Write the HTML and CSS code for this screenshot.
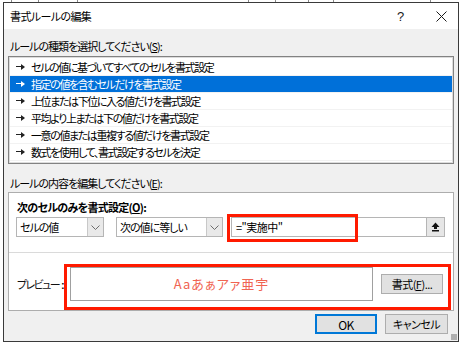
FILE: index.html
```html
<!DOCTYPE html>
<html lang="ja">
<head>
  <meta charset="UTF-8">
  <title>書式ルールの編集</title>
  <link rel="stylesheet" href="styles.css">
</head>
<body>
  <div class="backdrop">
    <span class="tick" style="left: 11px"></span>
    <span class="tick" style="left: 38px"></span>
    <span class="tick" style="left: 77px"></span>
    <span class="tick" style="left: 248px"></span>
    <span class="tick" style="left: 275px"></span>
    <span class="tick" style="left: 308px"></span>
    <span class="tick" style="left: 333px"></span>
    <span class="tick" style="left: 430px"></span>
  </div>

  <!-- Dialog window -->
  <div class="window">
    <div class="titlebar">
      <span class="title">書式ルールの編集</span>
      <span class="help">?</span>
      <span class="close">
        <svg width="11" height="11" viewBox="0 0 11 11"><path d="M0.5 0.5 L10.5 10.5 M10.5 0.5 L0.5 10.5" stroke="#1a1a1a" stroke-width="1"/></svg>
      </span>
    </div>

    <div class="content">
      <div class="label">ルールの種類を選択してください(<u>S</u>):</div>
      <ul class="rule-list">
        <li><span class="arrow"></span>セルの値に基づいてすべてのセルを書式設定</li>
        <li class="selected"><span class="arrow"></span>指定の値を含むセルだけを書式設定</li>
        <li><span class="arrow"></span>上位または下位に入る値だけを書式設定</li>
        <li><span class="arrow"></span>平均より上または下の値だけを書式設定</li>
        <li><span class="arrow"></span>一意の値または重複する値だけを書式設定</li>
        <li><span class="arrow"></span>数式を使用して、書式設定するセルを決定</li>
      </ul>

      <div class="label label-second">ルールの内容を編集してください(<u>E</u>):</div>
      <div class="panel">
        <div class="desc">
          <div class="desc-title">次のセルのみを書式設定(<u>O</u>):</div>
          <div class="cond-row">
            <div class="combo combo-small">
              <span class="combo-text">セルの値</span>
              <span class="combo-btn"><svg width="9" height="5" viewBox="0 0 9 5"><path d="M0.5 0.5 L4.5 4.5 L8.5 0.5" fill="none" stroke="#6d6d6d"/></svg></span>
            </div>
            <div class="combo combo-wide">
              <span class="combo-text">次の値に等しい</span>
              <span class="combo-btn"><svg width="9" height="5" viewBox="0 0 9 5"><path d="M0.5 0.5 L4.5 4.5 L8.5 0.5" fill="none" stroke="#6d6d6d"/></svg></span>
            </div>
            <div class="value-field">
              <span class="value-text">="実施中"</span>
              <span class="ref-btn"><svg width="9" height="10" viewBox="0 0 9 10"><path d="M4.5 0.5 L8.5 5 L6 5 L6 7 L3 7 L3 5 L0.5 5 Z" fill="#111"/><rect x="1" y="8" width="7" height="1.5" fill="#111"/></svg></span>
            </div>
          </div>
          <div class="mark mark-value"></div>
        </div>
        <div class="preview-row">
          <span class="preview-label">プレビュー<span class="colon">:</span></span>
          <div class="preview-box">Aaあぁアァ亜宇</div>
          <button class="btn btn-format">書式(<u>F</u>)...</button>
          <div class="mark mark-preview"></div>
        </div>
      </div>

      <div class="actions">
        <button class="btn btn-ok">OK</button>
        <button class="btn">キャンセル</button>
      </div>
    </div>
    <span class="grip"></span>
  </div>
</body>
</html>
```

FILE: styles.css
```css
/* Dialog page */
body {
  margin: 0;
  background-color: #ffffff;
  font-family: "Noto Sans CJK JP", "Noto Sans", sans-serif;
  font-size: 11px;
  color: #000000;
  font-feature-settings: "palt";
  letter-spacing: -1px;
}
.backdrop {
  position: relative;
  height: 2px;
}
.tick {
  position: absolute;
  top: 0;
  width: 1px;
  height: 2px;
  background-color: #8a8a8a;
}
.window {
  position: relative;
  margin-left: 3px;
  width: 454px;
  border: 1px solid #3a3a3a;
  background-color: #f0f0f0;
}
.titlebar {
  display: flex;
  align-items: center;
  height: 26px;
  background-color: #ffffff;
  padding-left: 6px;
  white-space: nowrap;
}
.title {
  flex: 1;
  letter-spacing: -0.6px;
}
.help {
  width: 20px;
  margin-right: 19px;
  font-family: "Liberation Sans", sans-serif;
  font-size: 13px;
  letter-spacing: 0;
  color: #1a1a1a;
}
.close {
  display: flex;
  margin-right: 11px;
}
.content {
  padding: 9px 4px 7px 4px;
}
.label {
  height: 16px;
  line-height: 16px;
  padding-left: 2px;
  margin-bottom: 2px;
  white-space: nowrap;
}
.label-second {
  margin-top: 11px;
  margin-bottom: 1px;
}
.rule-list {
  list-style: none;
  margin: 0;
  padding: 2px 1px 0 1px;
  height: 104px;
  background-color: #ffffff;
  border: 1px solid #828282;
  box-shadow: inset 0 0 0 1px #dcdcdc;
}
.rule-list li {
  display: flex;
  align-items: center;
  height: 16px;
  padding-left: 6px;
  border-bottom: 1px solid #f2f2f2;
  white-space: nowrap;
  letter-spacing: -1.4px;
}
.rule-list li.selected {
  background-color: #0070d9;
  color: #ffffff;
}
.arrow {
  position: relative;
  width: 9px;
  height: 2px;
  margin-right: 6px;
  color: #222222;
}
.selected .arrow {
  color: #ffffff;
}
.arrow::before {
  content: "";
  position: absolute;
  left: 0;
  top: 0;
  width: 5px;
  height: 1px;
  background-color: currentColor;
}
.arrow::after {
  content: "";
  position: absolute;
  left: 5px;
  top: -2.5px;
  border-left: 4px solid currentColor;
  border-top: 3px solid transparent;
  border-bottom: 3px solid transparent;
}
.panel {
  height: 117px;
  background-color: #ffffff;
  border: 1px solid #adadad;
}
.desc {
  position: relative;
  height: 53px;
  padding: 6px 0 0 7px;
  border-bottom: 1px solid #dadada;
}
.desc-title {
  height: 16px;
  line-height: 16px;
  font-weight: bold;
  margin-left: 1px;
  margin-bottom: 2px;
  white-space: nowrap;
  letter-spacing: -0.7px;
}
.cond-row {
  display: flex;
  height: 20px;
}
.combo {
  display: flex;
  box-sizing: border-box;
  height: 20px;
  border: 1px solid #b5b5b5;
  background-color: #ffffff;
}
.combo-small {
  width: 88px;
  margin-right: 12px;
}
.combo-wide {
  width: 107px;
  margin-right: 8px;
}
.combo-text {
  flex: 1;
  line-height: 18px;
  padding-left: 3px;
  white-space: nowrap;
}
.combo-btn {
  display: flex;
  align-items: center;
  justify-content: center;
  width: 15px;
  background-color: #e9e9e9;
  border-left: 1px solid #c8c8c8;
}
.value-field {
  display: flex;
  box-sizing: border-box;
  width: 214px;
  height: 20px;
  border: 1px solid #b5b5b5;
}
.value-text {
  flex: 1;
  line-height: 18px;
  padding-left: 4px;
  letter-spacing: -0.5px;
}
.ref-btn {
  display: flex;
  align-items: center;
  justify-content: center;
  width: 17px;
  background-color: #e6e6e6;
  border-left: 1px solid #b5b5b5;
}
.preview-row {
  position: relative;
  display: flex;
  align-items: center;
  height: 56px;
  padding: 6px 0 0 8px;
  box-sizing: border-box;
}
.preview-label {
  flex: none;
  width: 53px;
  white-space: nowrap;
  letter-spacing: -1.6px;
  color: #111111;
}
.colon {
  margin-left: 2px;
  font-family: "Liberation Sans", sans-serif;
  font-weight: bold;
  letter-spacing: 0;
}
.preview-box {
  flex: none;
  box-sizing: border-box;
  width: 303px;
  height: 34px;
  line-height: 32px;
  border: 1px solid #a0a0a0;
  text-align: center;
  color: #f06452;
  font-size: 13px;
  letter-spacing: 1px;
}
.btn {
  box-sizing: border-box;
  height: 20px;
  width: 63px;
  padding: 0;
  border: 1px solid #adadad;
  background-color: #e1e1e1;
  font-family: "Noto Sans CJK JP", "Noto Sans", sans-serif;
  font-size: 11px;
  letter-spacing: -0.5px;
  color: #000000;
  font-feature-settings: "palt";
  white-space: nowrap;
}
.btn-format {
  width: 62px;
  margin-left: 8px;
}
.btn-ok {
  width: 62px;
  border-color: #0078d7;
  box-shadow: inset 0 0 0 1px #0078d7;
  font-size: 12px;
}
.actions {
  display: flex;
  justify-content: flex-end;
  gap: 8px;
  margin-top: 3px;
  padding-right: 6px;
}
/* red annotation boxes drawn over the dialog */
.mark {
  position: absolute;
  box-sizing: border-box;
  border: 3px solid #ff1a00;
}
.mark-value {
  left: 218px;
  top: 21px;
  width: 131px;
  height: 28px;
}
.mark-preview {
  left: 55px;
  top: 11px;
  width: 387px;
  height: 46px;
}
.grip {
  position: absolute;
  right: 1px;
  bottom: 1px;
  width: 6px;
  height: 6px;
  background-image: radial-gradient(circle, #b0b0b0 0.8px, transparent 1px);
  background-size: 2px 2px;
}
```
